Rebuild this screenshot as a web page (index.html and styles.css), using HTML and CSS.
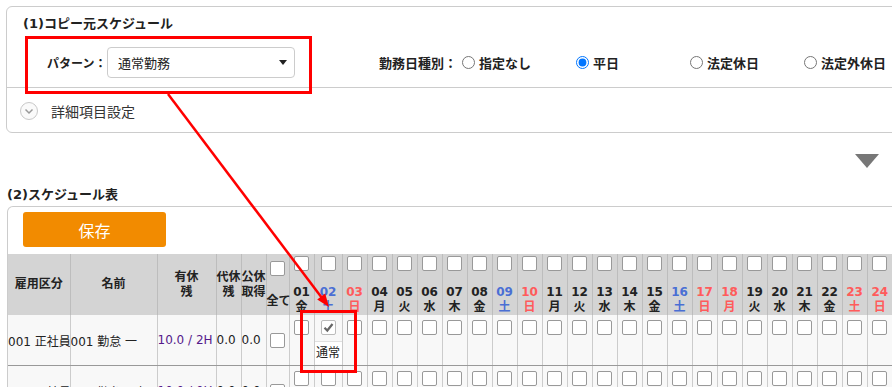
FILE: index.html
```html
<!DOCTYPE html>
<html lang="ja">

<head>
    <meta charset="UTF-8" />
    <meta name="viewport" content="width=device-width, initial-scale=1.0" />
    <title>スケジュールコピー</title>
    <link rel="stylesheet" href="styles.css">
</head>

<body>
    <div class="page">
        <div class="panel copy-source">
            <div class="panel-title">(1)コピー元スケジュール</div>
            <div class="pattern-row">
                <span class="pattern-label">パターン：</span>
                <div class="select-box">
                    <span>通常勤務</span>
                    <span class="select-arrow"></span>
                </div>
                <span class="day-type-label">勤務日種別：</span>
                <label class="radio-item"><input type="radio" name="daytype">指定なし</label>
                <label class="radio-item"><input type="radio" name="daytype" checked>平日</label>
                <label class="radio-item"><input type="radio" name="daytype">法定休日</label>
                <label class="radio-item"><input type="radio" name="daytype">法定外休日</label>
            </div>
            <div class="detail-row">
                <span class="toggle-circle">
                    <svg width="18" height="18" viewBox="0 0 18 18">
                        <circle cx="9" cy="9" r="8.5" fill="#fafafa" stroke="#c8c8c8" />
                        <path d="M5.5 7.5 L9 11 L12.5 7.5" fill="none" stroke="#999" stroke-width="1.5" />
                    </svg>
                </span>
                詳細項目設定
            </div>
        </div>

        <div class="collapse-row"><span class="collapse-arrow"></span></div>

        <div class="section-title">(2)スケジュール表</div>
        <div class="panel schedule">
            <button class="btn-save">保存</button>
            <table class="schedule-table">
                <colgroup>
                    <col class="col-type">
                    <col class="col-name">
                    <col class="col-paid">
                    <col class="col-sub">
                    <col class="col-pub">
                    <col class="col-all">
                    <col class="col-day">
                    <col class="col-day-wide">
                    <col class="col-day"><col class="col-day"><col class="col-day"><col class="col-day">
                    <col class="col-day"><col class="col-day"><col class="col-day"><col class="col-day">
                    <col class="col-day"><col class="col-day"><col class="col-day"><col class="col-day">
                    <col class="col-day"><col class="col-day"><col class="col-day"><col class="col-day">
                    <col class="col-day"><col class="col-day"><col class="col-day"><col class="col-day">
                    <col class="col-day"><col class="col-day">
                </colgroup>
                <thead>
                    <tr>
                        <th>雇用区分</th>
                        <th>名前</th>
                        <th>有休<br>残</th>
                        <th>代休<br>残</th>
                        <th>公休<br>取得</th>
                        <th class="all-head"><span class="cb"></span>全て</th>
                        <th class="day"><span class="cb"></span><span class="day-num">01</span><span class="day-week">金</span></th>
                        <th class="day sat"><span class="cb"></span><span class="day-num">02</span><span class="day-week">土</span></th>
                        <th class="day sun"><span class="cb"></span><span class="day-num">03</span><span class="day-week">日</span></th>
                        <th class="day"><span class="cb"></span><span class="day-num">04</span><span class="day-week">月</span></th>
                        <th class="day"><span class="cb"></span><span class="day-num">05</span><span class="day-week">火</span></th>
                        <th class="day"><span class="cb"></span><span class="day-num">06</span><span class="day-week">水</span></th>
                        <th class="day"><span class="cb"></span><span class="day-num">07</span><span class="day-week">木</span></th>
                        <th class="day"><span class="cb"></span><span class="day-num">08</span><span class="day-week">金</span></th>
                        <th class="day sat"><span class="cb"></span><span class="day-num">09</span><span class="day-week">土</span></th>
                        <th class="day sun"><span class="cb"></span><span class="day-num">10</span><span class="day-week">日</span></th>
                        <th class="day"><span class="cb"></span><span class="day-num">11</span><span class="day-week">月</span></th>
                        <th class="day"><span class="cb"></span><span class="day-num">12</span><span class="day-week">火</span></th>
                        <th class="day"><span class="cb"></span><span class="day-num">13</span><span class="day-week">水</span></th>
                        <th class="day"><span class="cb"></span><span class="day-num">14</span><span class="day-week">木</span></th>
                        <th class="day"><span class="cb"></span><span class="day-num">15</span><span class="day-week">金</span></th>
                        <th class="day sat"><span class="cb"></span><span class="day-num">16</span><span class="day-week">土</span></th>
                        <th class="day sun"><span class="cb"></span><span class="day-num">17</span><span class="day-week">日</span></th>
                        <th class="day sun"><span class="cb"></span><span class="day-num">18</span><span class="day-week">月</span></th>
                        <th class="day"><span class="cb"></span><span class="day-num">19</span><span class="day-week">火</span></th>
                        <th class="day"><span class="cb"></span><span class="day-num">20</span><span class="day-week">水</span></th>
                        <th class="day"><span class="cb"></span><span class="day-num">21</span><span class="day-week">木</span></th>
                        <th class="day"><span class="cb"></span><span class="day-num">22</span><span class="day-week">金</span></th>
                        <th class="day sun"><span class="cb"></span><span class="day-num">23</span><span class="day-week">土</span></th>
                        <th class="day sun"><span class="cb"></span><span class="day-num">24</span><span class="day-week">日</span></th>
                    </tr>
                </thead>
                <tbody>
                    <tr>
                        <td class="text-cell first">001 正社員</td>
                        <td class="text-cell">001 勤怠 一</td>
                        <td class="text-cell"><a class="paid-link" href="#">10.0 / 2H</a></td>
                        <td class="text-cell">0.0</td>
                        <td class="text-cell">0.0</td>
                        <td class="all-cell"><span class="cb"></span></td>
                        <td class="day-cell"><span class="cb"></span></td>
                        <td class="day-cell">
                            <span class="cb checked">
                                <svg width="13" height="13" viewBox="0 0 13 13">
                                    <path d="M2.5 6.8 L5.3 9.5 L10.5 3" fill="none" stroke="#666" stroke-width="2.2" />
                                </svg>
                            </span>
                            <span class="pattern-tag">通常</span>
                        </td>
                        <td class="day-cell"><span class="cb"></span></td>
                        <td class="day-cell"><span class="cb"></span></td>
                        <td class="day-cell"><span class="cb"></span></td>
                        <td class="day-cell"><span class="cb"></span></td>
                        <td class="day-cell"><span class="cb"></span></td>
                        <td class="day-cell"><span class="cb"></span></td>
                        <td class="day-cell"><span class="cb"></span></td>
                        <td class="day-cell"><span class="cb"></span></td>
                        <td class="day-cell"><span class="cb"></span></td>
                        <td class="day-cell"><span class="cb"></span></td>
                        <td class="day-cell"><span class="cb"></span></td>
                        <td class="day-cell"><span class="cb"></span></td>
                        <td class="day-cell"><span class="cb"></span></td>
                        <td class="day-cell"><span class="cb"></span></td>
                        <td class="day-cell"><span class="cb"></span></td>
                        <td class="day-cell"><span class="cb"></span></td>
                        <td class="day-cell"><span class="cb"></span></td>
                        <td class="day-cell"><span class="cb"></span></td>
                        <td class="day-cell"><span class="cb"></span></td>
                        <td class="day-cell"><span class="cb"></span></td>
                        <td class="day-cell"><span class="cb"></span></td>
                        <td class="day-cell"><span class="cb"></span></td>
                        <td class="day-cell"><span class="cb"></span></td>
                        <td class="day-cell"><span class="cb"></span></td>
                    </tr>
                    <tr>
                        <td class="text-cell first">002 正社員</td>
                        <td class="text-cell">002 勤怠 二郎</td>
                        <td class="text-cell"><a class="paid-link" href="#">10.0 / 0H</a></td>
                        <td class="text-cell">0.0</td>
                        <td class="text-cell">0.0</td>
                        <td class="all-cell"><span class="cb"></span></td>
                        <td class="day-cell"><span class="cb"></span></td>
                        <td class="day-cell"><span class="cb"></span></td>
                        <td class="day-cell"><span class="cb"></span></td>
                        <td class="day-cell"><span class="cb"></span></td>
                        <td class="day-cell"><span class="cb"></span></td>
                        <td class="day-cell"><span class="cb"></span></td>
                        <td class="day-cell"><span class="cb"></span></td>
                        <td class="day-cell"><span class="cb"></span></td>
                        <td class="day-cell"><span class="cb"></span></td>
                        <td class="day-cell"><span class="cb"></span></td>
                        <td class="day-cell"><span class="cb"></span></td>
                        <td class="day-cell"><span class="cb"></span></td>
                        <td class="day-cell"><span class="cb"></span></td>
                        <td class="day-cell"><span class="cb"></span></td>
                        <td class="day-cell"><span class="cb"></span></td>
                        <td class="day-cell"><span class="cb"></span></td>
                        <td class="day-cell"><span class="cb"></span></td>
                        <td class="day-cell"><span class="cb"></span></td>
                        <td class="day-cell"><span class="cb"></span></td>
                        <td class="day-cell"><span class="cb"></span></td>
                        <td class="day-cell"><span class="cb"></span></td>
                        <td class="day-cell"><span class="cb"></span></td>
                        <td class="day-cell"><span class="cb"></span></td>
                        <td class="day-cell"><span class="cb"></span></td>
                    </tr>
                </tbody>
            </table>
        </div>
    </div>

    <!-- red annotation: source pattern -> copied cell -->
    <svg class="annotation" width="892" height="387" viewBox="0 0 892 387">
        <rect x="26.5" y="37.5" width="284" height="55" fill="none" stroke="#ff0000" stroke-width="3" />
        <line x1="168" y1="94" x2="322" y2="298" stroke="#ff0000" stroke-width="2.5" />
        <polygon points="329,307 317.2,299.6 325.2,293.6" fill="#ff0000" />
        <rect x="301.5" y="311.5" width="54" height="60" fill="none" stroke="#ff0000" stroke-width="3" />
    </svg>
</body>

</html>
```

FILE: styles.css
```css
html,
body {
    margin: 0;
    padding: 0;
    overflow: hidden;
}

body {
    font-family: "DejaVu Sans", "Noto Sans CJK JP", sans-serif;
    font-size: 12px;
    color: #222;
    background-color: #fff;
}

.page {
    padding: 6px 0 0 6px;
}

.panel {
    border: 1px solid #ccc;
    border-radius: 6px;
    background-color: #fff;
}

/* (1) copy source */
.copy-source {
    width: 940px;
}

.panel-title {
    padding: 8px 0 0 16px;
    font-size: 13px;
    font-weight: bold;
    line-height: 18px;
}

.pattern-row {
    display: flex;
    align-items: center;
    height: 49px;
    padding: 5px 0 0 40px;
    border-bottom: 1px solid #ccc;
}

.pattern-label {
    font-size: 12px;
    font-weight: bold;
    width: 60px;
    white-space: nowrap;
}

.select-box {
    display: flex;
    align-items: center;
    justify-content: space-between;
    box-sizing: border-box;
    width: 188px;
    height: 31px;
    padding: 0 7px 0 10px;
    border: 1px solid #ccc;
    border-radius: 4px;
    font-size: 13px;
    background-color: #fff;
}

.select-arrow {
    width: 0;
    height: 0;
    border-left: 4px solid transparent;
    border-right: 4px solid transparent;
    border-top: 5px solid #222;
}

.day-type-label {
    margin-left: 84px;
    font-size: 13px;
    font-weight: bold;
    white-space: nowrap;
}

.radio-item {
    display: inline-flex;
    align-items: center;
    width: 114px;
    font-size: 13px;
    font-weight: bold;
    white-space: nowrap;
}

.radio-item input {
    margin: 0 4px 0 5px;
    width: 13px;
    height: 13px;
}

.detail-row {
    display: flex;
    align-items: center;
    height: 43px;
    padding: 1px 0 0 13px;
    font-size: 14px;
    color: #333;
}

.toggle-circle {
    display: flex;
    margin-right: 13px;
}

/* collapse toggle */
.collapse-row {
    display: flex;
    justify-content: flex-end;
    align-items: flex-start;
    height: 53px;
    padding-right: 13px;
}

.collapse-arrow {
    margin-top: 21px;
    width: 0;
    height: 0;
    border-left: 12px solid transparent;
    border-right: 12px solid transparent;
    border-top: 14px solid #777;
}

/* (2) schedule */
.section-title {
    padding-left: 1px;
    margin-bottom: 2px;
    font-size: 13px;
    font-weight: bold;
    line-height: 18px;
}

.schedule {
    margin-left: 1px;
    width: 940px;
    border-bottom: none;
    border-radius: 6px 6px 0 0;
}

.btn-save {
    display: block;
    margin: 5px 0 0 15px;
    width: 143px;
    height: 35px;
    border: none;
    border-radius: 3px;
    background-color: #f28b00;
    color: #fff;
    font-family: "DejaVu Sans", "Noto Sans CJK JP", sans-serif;
    font-size: 16px;
    cursor: pointer;
}

.schedule-table {
    margin-top: 7px;
    width: 884px;
    border-collapse: collapse;
    table-layout: fixed;
}

.col-type { width: 62px; }
.col-name { width: 87px; }
.col-paid { width: 59px; }
.col-sub { width: 25px; }
.col-pub { width: 25px; }
.col-all { width: 23px; }
.col-day { width: 25px; }
.col-day-wide { width: 28px; }

.schedule-table th {
    height: 59px;
    padding: 0;
    background-color: #d4d4d4;
    border-left: 1px solid #bdbdbd;
    font-size: 12px;
    font-weight: bold;
    line-height: 15px;
    text-align: center;
    vertical-align: middle;
    white-space: nowrap;
}

.schedule-table th:first-child {
    border-left: none;
}

.cb {
    display: block;
    box-sizing: border-box;
    width: 15px;
    height: 15px;
    margin: 0 auto;
    border: 1px solid #999;
    border-radius: 2px;
    background-color: #fff;
}

.cb.checked {
    border-color: #bbb;
}

.cb.checked svg {
    display: block;
    margin: 0 auto;
}

.all-head .cb {
    margin-bottom: 18px;
}

.schedule-table th.day {
    vertical-align: top;
    padding-top: 2px;
}

.day-num {
    display: block;
    margin-top: 14px;
}

.day-week {
    display: block;
}

.sat {
    color: #4a6fd4;
}

.sun {
    color: #ff5b5b;
}

.schedule-table td {
    height: 45px;
    padding: 0;
    background-color: #f8f8f8;
    border-left: 1px solid #ccc;
    border-bottom: 1px solid #999;
}

.text-cell {
    padding: 0 0 0 2px;
    white-space: nowrap;
    overflow: hidden;
    vertical-align: middle;
}

.schedule-table td.first {
    border-left: none;
    padding-left: 0;
}

.paid-link {
    color: #551a8b;
    text-decoration: none;
}

.all-cell {
    vertical-align: middle;
}

.schedule-table td.day-cell {
    vertical-align: top;
    padding-top: 5px;
}

.pattern-tag {
    display: block;
    margin-top: 6px;
    background-color: #fff;
    border-top: 1px solid #e0e0e0;
    line-height: 22px;
    font-size: 12px;
    text-align: center;
    color: #222;
}

/* annotation overlay */
.annotation {
    position: absolute;
    top: 0;
    left: 0;
    pointer-events: none;
}
```
